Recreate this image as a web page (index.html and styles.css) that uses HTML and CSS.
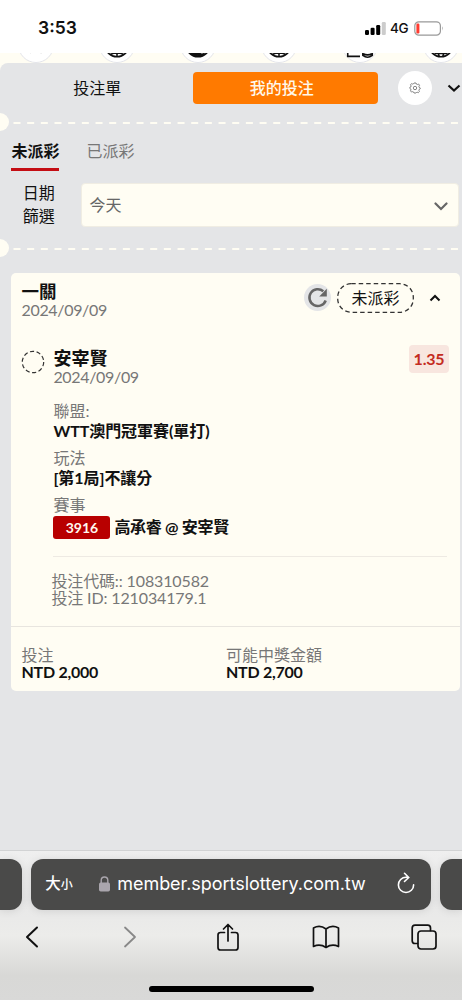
FILE: index.html
```html
<!DOCTYPE html>
<html lang="zh-Hant">
<head>
<meta charset="utf-8">
<title>我的投注</title>
<link rel="stylesheet" href="styles.css">
</head>
<body>
<header class="status">
  <span class="clock">3:53</span>
  <div class="status-right">
    <svg class="signal" width="21" height="13" viewBox="0 0 21 13"><rect x="0" y="8" width="4" height="5" rx="1.2"/><rect x="5.6" y="5.8" width="4" height="7.2" rx="1.2"/><rect x="11.2" y="3" width="4" height="10" rx="1.2"/><rect class="weak" x="16.8" y="0" width="4" height="13" rx="1.2"/></svg>
    <span class="network">4G</span>
    <svg class="battery" width="30" height="15" viewBox="0 0 30 15"><rect class="shell" x=".8" y=".8" width="25.6" height="13.4" rx="4"/><rect class="charge" x="2.4" y="2.5" width="3" height="10" rx="1.2"/><path class="tip" d="M28 5.2q1.7 2.2 0 4.6z"/></svg>
  </div>
</header>

<nav class="sports">
  <span class="sport"><svg viewBox="0 0 36 36"><path class="faint" d="M12 26.5l2-1M22 26l2 .5"/></svg></span>
  <span class="sport"><svg viewBox="0 0 36 36"><circle cx="18" cy="18" r="12.500"/><path d="M18 18v12M11 28q7-3 14 0"/></svg></span>
  <span class="sport"><svg viewBox="0 0 36 36"><circle cx="18" cy="18" r="12.500"/><path class="solid" d="M10 26h9q2 3 6 1q-7 6-15-1z"/></svg></span>
  <span class="sport"><svg viewBox="0 0 36 36"><circle cx="18" cy="18" r="12.500"/><path d="M18 18v12M11 28q7-3 14 0"/></svg></span>
  <span class="sport"><svg viewBox="0 0 36 36"><path d="M5 25v5h13M21 25v4q5 4 10 0v-4M21 27q5 3 10 0"/></svg></span>
  <span class="sport"><svg viewBox="0 0 36 36"><circle cx="18" cy="18" r="12.500"/><path d="M11 27h14M15 26l1 4M21 26l-1 4"/></svg></span>
</nav>

<main class="panel">
  <div class="switch">
    <span class="slip">投注單</span>
    <span class="mine">我的投注</span>
    <span class="gear"><svg width="12" height="12" viewBox="0 0 12 12"><path d="M5 1h2l.4 1.1 1 .4 1.1-.5 1 1.2-.6 1.1.3 1.1 1 .5v1l-1 .5-.3 1.1.5 1-1.1 1.2-1.1-.5-.9.4L7 11H5l-.4-1-.9-.4-1.1.5-1.1-1.2.5-1L1.700 6.900.8 6.400v-1l1-.4.3-1.100-.6-1.100 1-1.200 1.100.5 1-.4z"/><circle cx="6" cy="6" r="1.7"/></svg></span>
    <svg class="collapse" width="14" height="9" viewBox="0 0 14 9"><path d="M1.500 1.500l5.500 5 5.500-5"/></svg>
  </div>
  <div class="tear"><svg width="462" height="18"><circle cx="0" cy="9" r="9"/><path d="M13.500 10h449"/></svg></div>
  <div class="tabs"><span class="tab active">未派彩</span><span class="tab">已派彩</span></div>
  <div class="filter">
    <span class="filter-label">日期<br>篩選</span>
    <div class="select"><span>今天</span><svg width="14" height="9" viewBox="0 0 14 9"><path d="M1.500 1.500L7 7l5.500-5.500"/></svg></div>
  </div>
  <div class="tear"><svg width="462" height="18"><circle cx="0" cy="9" r="9"/><path d="M13.500 10h449"/></svg></div>

  <article class="card">
    <div class="card-head">
      <div class="titles"><strong class="title">一關</strong><span class="date">2024/09/09</span></div>
      <span class="refresh"><svg width="27" height="27" viewBox="0 0 27 27"><path class="arc" d="M21.700 16.500A8.400 8.400 0 1 1 19.300 7.200"/><path class="head" d="M22.800 4.800v7.600h-7.600z"/></svg></span>
      <span class="pill"><svg width="77" height="30" viewBox="0 0 77 30"><rect x=".7" y=".7" width="75.6" height="28.600" rx="13.500"/></svg><span>未派彩</span></span>
      <svg class="fold" width="12" height="8" viewBox="0 0 12 8"><path d="M1.500 6.500L6 2l4.500 4.500"/></svg>
    </div>
    <div class="bet">
      <svg class="pending" width="24" height="24" viewBox="0 0 24 24"><circle cx="12" cy="12" r="10.700"/></svg>
      <div class="bet-main">
        <div class="pick">
          <div class="titles"><strong class="title player">安宰賢</strong><span class="date">2024/09/09</span></div>
          <span class="odds">1.35</span>
        </div>
        <dl class="facts">
          <dt>聯盟:</dt><dd>WTT澳門冠軍賽(單打)</dd>
          <dt>玩法</dt><dd>[第1局]不讓分</dd>
          <dt>賽事</dt><dd class="match"><span class="code">3916</span>高承睿 @ 安宰賢</dd>
        </dl>
        <div class="ids"><span>投注代碼:: 108310582</span><span>投注 ID: 121034179.1</span></div>
      </div>
    </div>
    <footer class="totals">
      <div class="total"><span>投注</span><strong>NTD 2,000</strong></div>
      <div class="total"><span>可能中獎金額</span><strong>NTD 2,700</strong></div>
    </footer>
  </article>
</main>

<footer class="browser">
  <div class="address-row">
    <span class="side left"></span>
    <div class="address">
      <span class="size">大<small>小</small></span>
      <svg class="lock" width="11" height="16" viewBox="0 0 11 16"><rect x="0" y="6.500" width="11" height="9" rx="1.700"/><path d="M2.200 7V4.300a3.300 3.300 0 0 1 6.600 0V7"/></svg>
      <span class="url">member.sportslottery.com.tw</span>
      <svg class="reload" width="18" height="22" viewBox="0 0 18 22"><path d="M9 5.300A7.600 7.600 0 1 0 16.600 12.900M7.500 1.300l4.200 4.200L7.500 9.500M9 5.300h2.500"/></svg>
    </div>
    <span class="side right"></span>
  </div>
  <div class="tools">
    <svg width="14" height="22" viewBox="0 0 14 22"><path d="M12 1.500L2 11l10 9.500"/></svg>
    <svg class="disabled" width="14" height="22" viewBox="0 0 14 22"><path d="M2 1.500L12 11 2 20.500"/></svg>
    <svg class="thin" width="24" height="28" viewBox="0 0 24 28"><path d="M8.500 9.500H4.500Q2 9.500 2 12v12.500Q2 27 4.500 27h15q2.500 0 2.500-2.500V12q0-2.500-2.500-2.500h-4M12 18V2M7.500 6L12 1.500 16.500 6"/></svg>
    <svg class="thin" width="28" height="24" viewBox="0 0 28 24"><path d="M14 4Q8-.5 1.500 3v18.500Q8 18.500 14 22.500q6-4 12.500-1V3Q20-.5 14 4v18"/></svg>
    <svg class="thin" width="26" height="26" viewBox="0 0 26 26"><path d="M6.500 19.500H4Q1.200 19.500 1.200 16.700V4Q1.200 1.200 4 1.200h12.700q2.800 0 2.800 2.800v2.500"/><rect x="7" y="7" width="18" height="18" rx="3"/></svg>
  </div>
  <div class="home"></div>
</footer>
</body>
</html>
```

FILE: styles.css
```css
* { box-sizing: border-box; }
body {
  margin: 0;
  width: 462px;
  height: 1000px;
  overflow: hidden;
  display: flex;
  flex-direction: column;
  background: #fff;
  color: #111;
  font: 16px/18px Lato, "Noto Sans CJK TC", sans-serif;
}
svg { display: block; fill: none; flex: none; }
.status {
  height: 53px;
  padding: 0 18px 0 38px;
  display: flex;
  justify-content: space-between;
  align-items: center;
  font-family: Inter, sans-serif;
}
.clock { font-size: 17.500px; font-weight: 600; padding-top: 3px; }
.status-right { display: flex; align-items: center; padding-top: 3px; }
.signal { fill: #000; }
.weak { fill: #ccc; }
.network { font-size: 13.5px; font-weight: 500; width: 18px; margin: 0 6px 0 4px; letter-spacing: -.3px; }
.shell { stroke: #999; stroke-width: 1.200; }
.charge { fill: #ff3b30; }
.tip { fill: #999; }

.sports {
  height: 10px;
  flex: none;
  overflow: hidden;
  background: #fffdf3;
  display: flex;
  align-items: flex-end;
  gap: 45px;
  padding-left: 18px;
}
.sport {
  width: 36px;
  height: 36px;
  flex: none;
  border-radius: 50%;
  background: #fff;
  border: 1px solid #e4e5ea;
}
.sport svg { width: 34px; height: 34px; stroke: #111; stroke-width: 1.700; }
.sport .solid { fill: #111; }
.sport .faint { stroke: #ccc; stroke-width: 1; }

.panel { flex: 1; background: #e4e5e7; border-top-left-radius: 8px; }
body { background: linear-gradient(#fff 53px, #fffdf3 53px, #fffdf3 90px, #fff 90px); }
.switch { height: 50px; display: flex; align-items: center; }
.slip { width: 193.400px; text-align: center; padding-left: 1px; }
.mine {
  width: 184.500px;
  height: 32px;
  line-height: 31px;
  border-radius: 4px;
  background: #ff7a00;
  color: #fff8ea;
  font-weight: 500;
  text-align: center;
  padding-right: 8px;
}
.gear {
  width: 34px;
  height: 34px;
  margin: 0 15px 0 20px;
  border-radius: 50%;
  background: #fff;
  display: grid;
  place-items: center;
}
.gear svg { stroke: #777; stroke-width: .9; }
.collapse { stroke: #111; stroke-width: 2.200; }
.tear circle { fill: #fffdf3; }
.tear path { stroke: #fffdf3; stroke-width: 2.200; stroke-dasharray: 7 6.670; }

.tabs { height: 40px; padding: 8px 0 0 11.400px; display: flex; gap: 27px; }
.tab { height: 32px; line-height: 24px; color: #777; }
.tab.active { color: #111; font-weight: 700; border-bottom: 3.500px solid #c40d14; }
.filter { height: 68px; padding-top: 12px; display: flex; }
.filter-label { width: 80.500px; text-align: center; line-height: 23px; padding: 0 3px 0 0; margin-top: -2px; }
.select {
  width: 378px;
  height: 44px;
  border: 1px solid #f0ede3;
  border-radius: 4px;
  background: #fffdf3;
  color: #666;
  padding: 0 10px 0 8px;
  display: flex;
  justify-content: space-between;
  align-items: center;
}
.select svg { stroke: #666; stroke-width: 2.200; stroke-linecap: round; margin-top: 2px; }

.card {
  margin: 16px 2px 0 11px;
  height: 417.500px;
  border-radius: 5px;
  background: #fffdf3;
  display: flex;
  flex-direction: column;
}
.card-head { height: 69px; padding: 9px 19px 0 10.500px; display: flex; align-items: flex-start; }
.titles { flex: 1; display: flex; flex-direction: column; }
.title { font-size: 17.500px; line-height: 19px; }
.date { color: #777; line-height: 18px; letter-spacing: -.33px; }
.refresh { width: 27px; height: 27px; border-radius: 50%; background: #e4e5e7; margin: 2px 6px 0 0; }
.arc { stroke: #666; stroke-width: 2.500; }
.head { fill: #666; }
.pill { width: 77px; height: 30px; margin-top: 1px; display: grid; place-items: center; }
.pill > * { grid-area: 1 / 1; }
.pill svg { stroke: #333; stroke-width: 1.300; stroke-dasharray: 4.500 3; }
.fold { margin: 12px 0 0 15px; stroke: #111; stroke-width: 2; }
.bet { height: 284px; display: flex; padding: 8px 11px 0 10px; }
.pending { stroke: #333; stroke-width: 1.200; stroke-dasharray: 4.200 2.520; margin-right: 8.400px; }
.bet-main { flex: 1; }
.pick { display: flex; height: 47px; }
.pick .titles { margin-top: -1px; }
.player { font-size: 18px; }
.odds {
  width: 40px;
  height: 28px;
  margin: -5px 0 0;
  line-height: 28px;
  border-radius: 4px;
  background: #f8e6df;
  color: #c42b21;
  font-weight: 700;
  letter-spacing: -.2px;
  text-align: center;
}
.facts { margin: 5px 2px 0 0; height: 155px; border-bottom: 1.500px solid #eeeae3; }
dt { color: #777; height: 20px; line-height: 18px; }
dd { margin: 0; height: 27px; line-height: 18px; font-weight: 700; letter-spacing: -.06px; }
.match { display: flex; align-items: center; gap: 4px; height: 22px; letter-spacing: -.3px; }
.code {
  width: 57px;
  height: 23px;
  line-height: 23px;
  text-align: center;
  border-radius: 3px;
  background: #b80000;
  color: #fff8ee;
  font-size: 14px;
  letter-spacing: -.1px;
}
.ids { display: flex; flex-direction: column; margin: 14.500px 0 0 -2px; color: #777; line-height: 17.500px; letter-spacing: -.13px; }
.totals { flex: 1; border-top: 1.500px solid #e8e5df; padding: 19px 0 0 10.500px; display: flex; }
.total { width: 204.500px; display: flex; flex-direction: column; line-height: 17px; }
.total span { color: #777; }
.total strong { letter-spacing: -.25px; }

.browser {
  height: 150px;
  flex: none;
  border-top: 1px solid #d2d3d4;
  background: linear-gradient(#efefef 0, #e8e8e8 50px, #ececea 85px, #d8d8d6 125px, #d9d9d8);
  font-family: Inter, "Noto Sans CJK TC", sans-serif;
}
.address-row { display: flex; padding-top: 8px; gap: 9.200px; }
.side, .address { height: 50.500px; background: #4a4a49; box-shadow: 0 1px 8px #0000001a; }
.side { width: 22px; flex: none; }
.left { border-radius: 0 12px 12px 0; }
.right { border-radius: 12px 0 0 12px; }
.address { width: 399.500px; flex: none; border-radius: 12px; color: #fff; display: flex; align-items: center; padding: 0 16px 0 14px; }
.size { width: 54px; font-size: 15.500px; font-weight: 500; }
.size small { font-size: 12px; }
.lock { fill: #aaa6ad; }
.lock path { fill: none; stroke: #aaa6ad; stroke-width: 1.400; }
.url { font-size: 18px; line-height: 24px; margin-left: 7px; flex: 1; white-space: nowrap; letter-spacing: -.03px; }
.reload { stroke: #fff; stroke-width: 1.600; stroke-linecap: round; margin-bottom: 3px; }
.tools { width: 490px; height: 56px; margin-left: -17px; padding-bottom: 1px; display: grid; grid-template-columns: repeat(5, 98px); place-items: center; }
.tools svg { stroke: #111; stroke-width: 2; stroke-linecap: round; stroke-linejoin: round; }
.tools .thin { stroke-width: 1.700; }
.tools .disabled { stroke: #888; stroke-width: 1.800; }
.home { width: 165px; height: 6px; margin: 20px 0 0 148.500px; border-radius: 3px; background: #000; }
```
